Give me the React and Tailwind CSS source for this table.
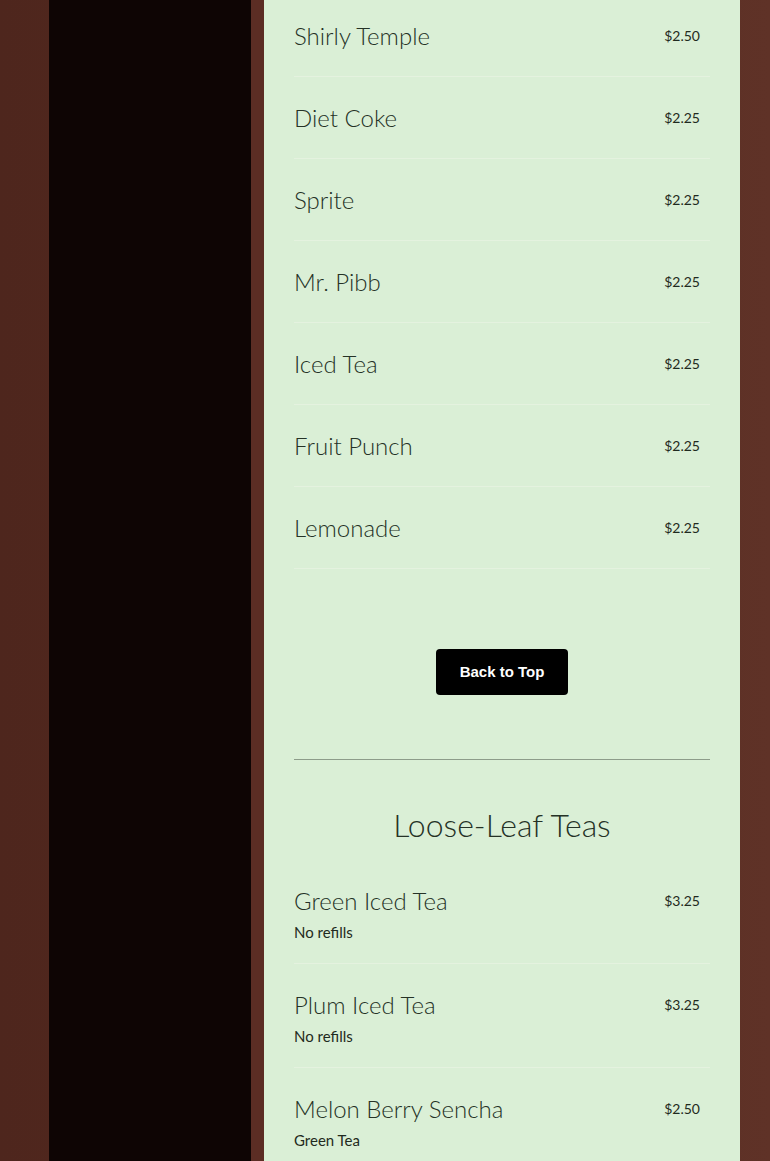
import React from "react";

const drinks = [
  ["Shirly Temple", "$2.50"],
  ["Diet Coke", "$2.25"],
  ["Sprite", "$2.25"],
  ["Mr. Pibb", "$2.25"],
  ["Iced Tea", "$2.25"],
  ["Fruit Punch", "$2.25"],
  ["Lemonade", "$2.25"],
];

const teas = [
  ["Green Iced Tea", "$3.25", "No refills"],
  ["Plum Iced Tea", "$3.25", "No refills"],
  ["Melon Berry Sencha", "$2.50", "Green Tea"],
];

export default function App() {
  return (
    <div
      className="min-h-[1161px] w-full bg-[linear-gradient(90deg,#4e261d_0%,#56291f_50%,#5f3227_100%)] overflow-hidden"
      style={{ fontFamily: "Lato, 'Noto Sans', sans-serif" }}
    >
      <div className="flex h-[1161px]">
        <div className="w-[49px] shrink-0" />
        <div className="w-[202px] shrink-0 bg-[#0e0504]" />
        <div className="w-[13px] shrink-0 bg-[#5b2d24]" />
        <div className="w-[476px] shrink-0 bg-[#daefd6] px-[30px] text-[#253226]">
          <div className="-mt-[5px]">
            {drinks.map(([name, price]) => (
              <div
                key={name}
                className="flex items-center justify-between border-b border-[#e4f2df] pt-[25px] pb-[24px] pr-[10px]"
              >
                <span className="text-[24px] leading-[32px] font-light">{name}</span>
                <span className="text-[14px] leading-[32px] text-[#1f2a20]">{price}</span>
              </div>
            ))}
          </div>
          <div className="flex justify-center pt-[80px] pb-[64px]">
            <button
              className="h-[46px] w-[132px] rounded-[4px] bg-black text-[15px] font-bold text-white"
              style={{ fontFamily: "'Liberation Sans', Arial, sans-serif" }}
            >
              Back to Top
            </button>
          </div>
          <div className="h-px bg-[#8d9c8a]" />
          <h2 className="mt-[45px] mb-[15px] text-center text-[32px] leading-[40px] font-light">
            Loose-Leaf Teas
          </h2>
          {teas.map(([name, price, sub]) => (
            <div
              key={name}
              className="border-b border-[#e4f2df] pt-[25px] pb-[20px] pr-[10px]"
            >
              <div className="flex items-center justify-between">
                <span className="text-[24px] leading-[32px] font-light">{name}</span>
                <span className="text-[14px] leading-[32px] text-[#1f2a20]">{price}</span>
              </div>
              <div className="mt-[4px] text-[15px] leading-[22px] text-[#1f2a20]">{sub}</div>
            </div>
          ))}
        </div>
      </div>
    </div>
  );
}
